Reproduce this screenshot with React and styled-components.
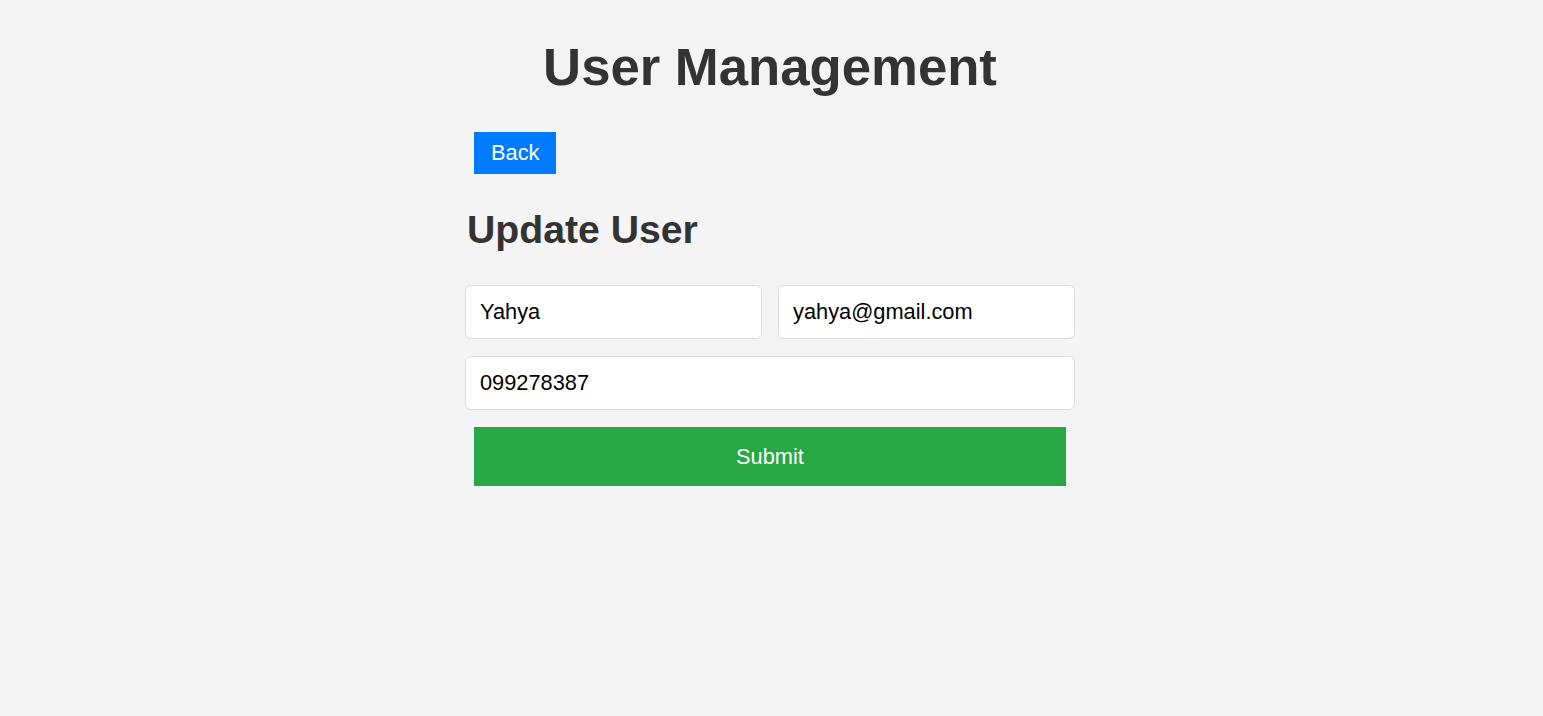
import React from "react";
import styled, { createGlobalStyle } from "styled-components";

const Global = createGlobalStyle`
  html, body { margin: 0; padding: 0; background: #f4f4f4; }
  body { font-family: "Liberation Sans", Arial, sans-serif; color: #333; }
  * { box-sizing: border-box; }
`;

const Page = styled.div`
  min-height: 716px;
  padding: 36px 3px 0 0;
`;

const Container = styled.div`
  width: 610px;
  margin: 0 auto;
`;

const Title = styled.h1`
  margin: 0 0 35px;
  font-size: 52.7px;
  line-height: 61px;
  font-weight: 700;
  text-align: center;
  color: #333;
`;

const Button = styled.button`
  display: block;
  margin: ${(p) => (p.$full ? "0 9px" : "0 0 0 9px")};
  width: ${(p) => (p.$full ? "calc(100% - 18px)" : "auto")};
  height: ${(p) => (p.$full ? "59px" : "42px")};
  padding: 0 17px;
  border: none;
  border-radius: 0;
  background: ${(p) => p.$bg};
  color: #fff;
  font-family: "Liberation Sans", Arial, sans-serif;
  font-size: 21.8px;
  cursor: pointer;
`;

const Heading = styled.h2`
  margin: 33px 0 33px 2px;
  font-size: 39.2px;
  line-height: 45px;
  font-weight: 700;
  color: #333;
`;

const Form = styled.form`
  display: flex;
  flex-direction: column;
  gap: 17.5px;
`;

const Row = styled.div`
  display: grid;
  grid-template-columns: ${(p) => (p.$cols === 2 ? "1fr 1fr" : "1fr")};
  gap: 16px;
`;

const Input = styled.input`
  width: 100%;
  height: 53.5px;
  padding: 0 14px;
  border: 1px solid #ddd;
  border-radius: 6px;
  background: #fff;
  color: #000;
  font-family: "Liberation Sans", Arial, sans-serif;
  font-size: 21.8px;
  outline: none;
`;

export default function App() {
  return (
    <>
      <Global />
      <Page>
        <Container>
          <Title>User Management</Title>
          <Button $bg="#007bff" type="button">Back</Button>
          <Heading>Update User</Heading>
          <Form onSubmit={(e) => e.preventDefault()}>
            <Row $cols={2}>
              <Input defaultValue="Yahya" />
              <Input defaultValue="yahya@gmail.com" />
            </Row>
            <Row>
              <Input defaultValue="099278387" />
            </Row>
            <Button $bg="#28a745" $full type="submit">Submit</Button>
          </Form>
        </Container>
      </Page>
    </>
  );
}
